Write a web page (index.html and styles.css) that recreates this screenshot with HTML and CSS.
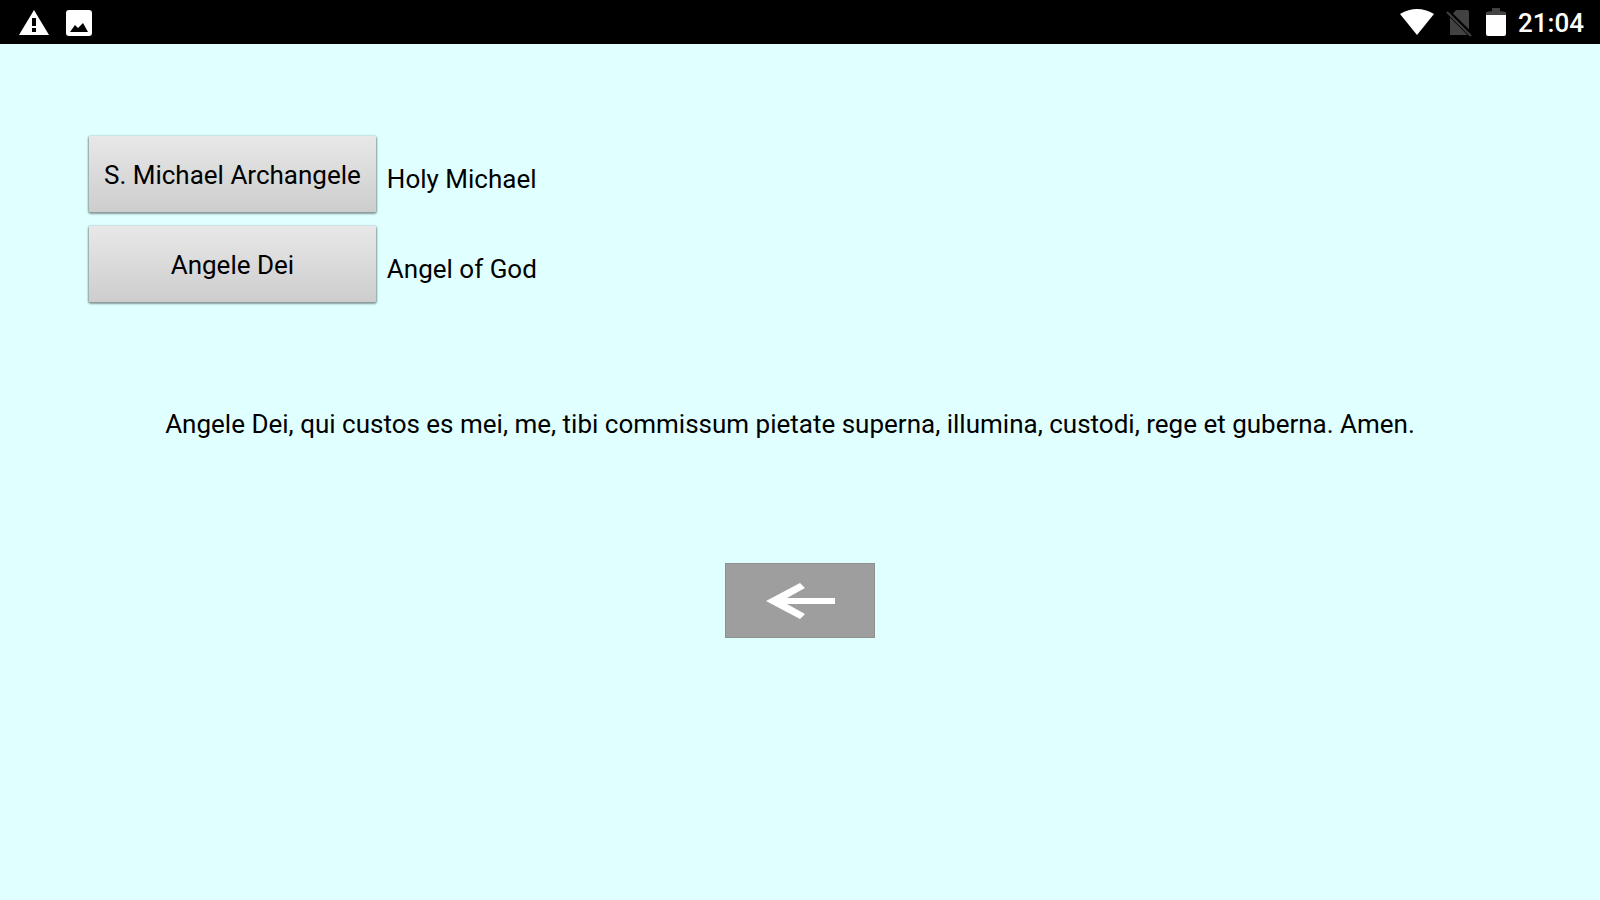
FILE: index.html
```html
<!DOCTYPE html>
<html lang="la">
<head>
    <meta charset="UTF-8">
    <meta name="viewport" content="width=device-width, initial-scale=1.0">
    <title>Angele Dei</title>
    <link rel="stylesheet" href="styles.css">
</head>
<body>
    <!-- Status bar -->
    <header class="status-bar">
        <div class="status-group notifications">
            <svg width="32" height="28" viewBox="0 0 32 28" aria-hidden="true">
                <path d="M16 1L31 26H1Z" fill="#fff"/>
                <path d="M14 9h4v8h-4zM14 19h4v4h-4z" fill="#000"/>
            </svg>
            <svg width="26" height="26" viewBox="0 0 26 26" aria-hidden="true">
                <rect width="26" height="26" rx="3" fill="#fff"/>
                <path d="M4 22L9 15L12 18L17 13L22 22Z" fill="#000"/>
            </svg>
        </div>
        <div class="status-group">
            <svg width="34" height="28" viewBox="0 0 34 28" aria-hidden="true">
                <path d="M0 5Q17-5 34 5L17 26Z" fill="#fff"/>
            </svg>
            <svg width="28" height="28" viewBox="0 0 28 28" aria-hidden="true">
                <path d="M10 1h11q2 0 2 2v23H4V8Z" fill="#424242"/>
                <path d="M1 2L25 26" stroke="#000" stroke-width="5"/>
                <path d="M1 3L25 27" stroke="#424242" stroke-width="2"/>
            </svg>
            <svg width="20" height="30" viewBox="0 0 20 30" aria-hidden="true">
                <path d="M0 7V4l6-1V0h8v3l6 1v3z" fill="#424242"/>
                <path d="M0 7h20v19q0 2-2 2H2q-2 0-2-2z" fill="#fff"/>
            </svg>
            <span class="clock">21:04</span>
        </div>
    </header>

    <main class="content">
        <!-- Prayer choices -->
        <div class="prayers">
            <button type="button" class="prayer-button" aria-describedby="michael">S. Michael Archangele</button>
            <span class="prayer-name" id="michael">Holy Michael</span>
            <button type="button" class="prayer-button" aria-describedby="angel">Angele Dei</button>
            <span class="prayer-name" id="angel">Angel of God</span>
        </div>

        <p class="prayer-text">Angele Dei, qui custos es mei, me, tibi commissum pietate superna, illumina, custodi, rege et guberna. Amen.</p>

        <button type="button" class="back-button" aria-label="Back">
            <svg width="70" height="38" viewBox="0 0 70 38" aria-hidden="true">
                <path d="M70 16v6H22L40 32L35 37L1 19L35 1L40 6L22 16Z" fill="#fff"/>
            </svg>
        </button>
    </main>
</body>
</html>
```
FILE: styles.css
```css
body {
    background-color: #e0ffff;
    font-family: Roboto, sans-serif;
    font-size: 26px;
    line-height: 32px;
    color: #000;
    margin: 0;
}
.status-bar {
    display: flex;
    justify-content: space-between;
    align-items: center;
    height: 42px;
    padding: 2px 16px 0 18px;
    background-color: #000;
}
.status-group {
    display: flex;
    align-items: center;
    gap: 12px;
}
.notifications {
    gap: 16px;
}
.clock {
    color: #fff;
    font-weight: 500;
}
.content {
    display: flex;
    flex-direction: column;
    align-items: center;
    padding: 92px 89px 0;
}
.prayers {
    align-self: flex-start;
    display: grid;
    grid-template-columns: auto auto;
    align-items: center;
    gap: 14px 11px;
}
.prayer-button {
    height: 76px;
    padding: 2px 15px 0;
    border: none;
    border-radius: 2px;
    background: linear-gradient(#e8e8e8, #cdcdcd);
    box-shadow: 0 1px 2px 1px rgba(0, 0, 0, 0.4);
    color: #000;
    font: inherit;
    cursor: pointer;
}
.prayer-name {
    padding-top: 10px;
}
.prayer-text {
    margin: 106px 0 123px;
    padding-right: 20px;
    text-align: center;
}
.back-button {
    display: flex;
    align-items: center;
    justify-content: center;
    width: 150px;
    height: 75px;
    padding: 0;
    border: 1px solid #8f8f8f;
    background-color: #9e9e9e;
    cursor: pointer;
}
```
